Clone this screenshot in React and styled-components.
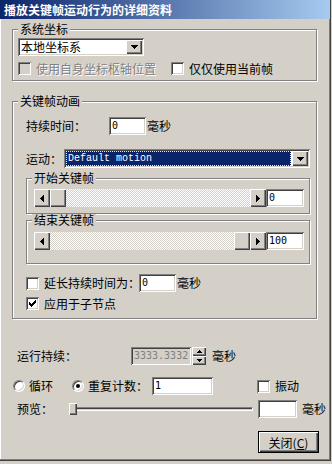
import React from "react";
import styled, { createGlobalStyle } from "styled-components";

const FACE = "#D4D0C8";
const SHADOW = "#808080";
const DARK = "#404040";
const LIGHT = "#FFFFFF";

const sunken = `box-shadow: inset 1px 1px ${SHADOW}, inset -1px -1px ${LIGHT}, inset 2px 2px ${DARK}, inset -2px -2px ${FACE};`;
const raised = `box-shadow: inset 1px 1px ${LIGHT}, inset -1px -1px ${DARK}, inset -2px -2px ${SHADOW};`;

const GlobalStyle = createGlobalStyle`
  html, body { margin: 0; padding: 0; background: ${FACE}; }
  body {
    font-family: "Noto Sans CJK SC", "Noto Sans", sans-serif;
    font-size: 12px;
    color: #000;
  }
  * { box-sizing: border-box; }
`;

const Window = styled.div`
  width: 331px;
  height: 461px;
  display: flex;
  flex-direction: column;
  background: ${FACE};
  border-right: 1px solid ${DARK};
  border-bottom: 1px solid ${DARK};
  box-shadow: inset -1px -1px ${SHADOW}, inset 1px 0 ${LIGHT};
`;

const TitleBar = styled.div`
  height: 19px;
  line-height: 19px;
  padding-left: 4px;
  color: #fff;
  font-weight: 700;
  font-size: 12px;
  white-space: nowrap;
  background: linear-gradient(to right, #0a246a, #a6caf0);
`;

const Body = styled.div`
  display: flex;
  flex-direction: column;
  align-items: flex-start;
  padding-left: 12px;
`;

const GroupBox = styled.div`
  display: flex;
  flex-direction: column;
  border: 1px solid ${SHADOW};
  box-shadow: 1px 1px 0 ${LIGHT}, inset 1px 1px 0 ${LIGHT};
  margin-top: ${(p) => p.$mt || 0}px;
  width: ${(p) => (p.$w ? `${p.$w}px` : "auto")};
  align-self: ${(p) => (p.$stretch ? "stretch" : "flex-start")};
`;

const Legend = styled.div`
  align-self: flex-start;
  margin: -7px 0 0 5px;
  padding: 0 2px;
  height: 12px;
  line-height: 12px;
  background: ${FACE};
  white-space: nowrap;
`;

const GroupBody = styled.div`
  display: flex;
  flex-direction: column;
  align-items: flex-start;
  padding: ${(p) => p.$pad};
`;

const Row = styled.div`
  display: flex;
  align-items: center;
  height: ${(p) => p.$h || 18}px;
  margin-top: ${(p) => p.$mt || 0}px;
  margin-left: ${(p) => p.$ml || 0}px;
  align-self: ${(p) => (p.$stretch ? "stretch" : "flex-start")};
`;

const Label = styled.span`
  width: ${(p) => p.$w}px;
  flex: none;
  white-space: nowrap;
  line-height: 12px;
`;

const Unit = styled.span`
  margin-left: ${(p) => p.$ml || 0}px;
  white-space: nowrap;
  line-height: 12px;
`;

const TextField = styled.div`
  width: ${(p) => p.$w}px;
  height: 18px;
  flex: none;
  margin-left: ${(p) => p.$ml || 0}px;
  padding-left: 3px;
  background: ${(p) => (p.$disabled ? FACE : LIGHT)};
  color: ${(p) => (p.$disabled ? SHADOW : "#000")};
  font-family: "DejaVu Sans Mono", "Liberation Mono", monospace;
  font-size: 10px;
  line-height: 18px;
  ${sunken}
`;

const ComboBox = styled.div`
  display: flex;
  align-items: stretch;
  padding: 2px;
  height: ${(p) => p.$h}px;
  width: ${(p) => (p.$w ? `${p.$w}px` : "auto")};
  flex: ${(p) => (p.$w ? "none" : "1")};
  background: ${LIGHT};
  ${sunken}
`;

const ComboText = styled.span`
  flex: 1;
  padding-left: 1px;
  line-height: 14px;
  white-space: nowrap;
`;

const ComboSelected = styled.span`
  flex: 1;
  margin-right: 1px;
  padding-left: 2px;
  background: #0a246a;
  color: #fff;
  font-family: "Liberation Mono", "DejaVu Sans Mono", monospace;
  font-size: 10px;
  line-height: 15px;
  white-space: nowrap;
  outline: 1px dotted #f4eca0;
  outline-offset: -1px;
`;

const DropButton = styled.span`
  width: 16px;
  flex: none;
  display: flex;
  align-items: center;
  justify-content: center;
  background: ${FACE};
  ${raised}
`;

const CheckLabel = styled.span`
  display: flex;
  align-items: center;
  gap: 5px;
  width: ${(p) => (p.$w ? `${p.$w}px` : "auto")};
  flex: none;
  margin-left: ${(p) => p.$ml || 0}px;
  white-space: nowrap;
  line-height: 12px;
  color: ${(p) => (p.$disabled ? SHADOW : "#000")};
  text-shadow: ${(p) => (p.$disabled ? `1px 1px 0 ${LIGHT}` : "none")};
`;

const CheckBox = styled.span`
  width: 13px;
  height: 13px;
  flex: none;
  display: flex;
  align-items: center;
  justify-content: center;
  background: ${(p) => (p.$disabled ? FACE : LIGHT)};
  ${sunken}
`;

const RadioLabel = styled.span`
  display: flex;
  align-items: center;
  gap: 4px;
  width: ${(p) => p.$w}px;
  flex: none;
  white-space: nowrap;
  line-height: 12px;
`;

const RadioCircle = styled.span`
  width: 12px;
  height: 12px;
  flex: none;
  display: flex;
  align-items: center;
  justify-content: center;
  border-radius: 50%;
  border: 1px solid;
  border-color: ${SHADOW} ${LIGHT} ${LIGHT} ${SHADOW};
  box-shadow: inset 1px 1px ${DARK}, inset -1px -1px ${FACE};
  background: ${LIGHT};
`;

const RadioDot = styled.span`
  width: 4px;
  height: 4px;
  border-radius: 50%;
  background: #000;
`;

const ScrollBar = styled.div`
  display: flex;
  width: ${(p) => p.$w}px;
  height: 18px;
  flex: none;
`;

const ScrollButton = styled.span`
  width: 16px;
  flex: none;
  display: flex;
  align-items: center;
  justify-content: center;
  background: ${FACE};
  ${raised}
`;

const Track = styled.span`
  flex: 1;
  background: repeating-conic-gradient(${LIGHT} 0 25%, ${FACE} 0 50%) 0 0 / 2px 2px;
`;

const Spin = styled.div`
  display: flex;
  flex-direction: column;
  width: 14px;
  height: 18px;
  flex: none;
  margin-left: ${(p) => p.$ml || 0}px;
`;

const SpinButton = styled.span`
  flex: 1;
  display: flex;
  align-items: center;
  justify-content: center;
  background: ${FACE};
  ${raised}
`;

const Trackbar = styled.div`
  position: relative;
  width: ${(p) => p.$w}px;
  height: 12px;
  flex: none;
  display: flex;
  align-items: center;
  padding-left: 1px;
`;

const Channel = styled.span`
  flex: 1;
  height: 4px;
  border-top: 1px solid ${SHADOW};
  border-left: 1px solid ${SHADOW};
  border-bottom: 1px solid ${LIGHT};
  border-right: 1px solid ${LIGHT};
  box-shadow: inset 1px 1px ${DARK};
  background: ${FACE};
`;

const TrackThumb = styled.span`
  position: absolute;
  left: 0;
  top: 0;
  width: 8px;
  height: 12px;
  background: ${FACE};
  ${raised}
`;

const PushButton = styled.button`
  width: 61px;
  height: 22px;
  margin-left: ${(p) => p.$ml || 0}px;
  padding: 0;
  border: 1px solid #000;
  background: ${FACE};
  font: inherit;
  color: #000;
  display: flex;
  align-items: center;
  justify-content: center;
  box-shadow: inset 1px 1px ${LIGHT}, inset -1px -1px ${DARK}, inset -2px -2px ${SHADOW};
`;

const Px = ({ w, h, d }) => (
  <svg width={w} height={h} viewBox={`0 0 ${w} ${h}`} shapeRendering="crispEdges">
    <path d={d} fill="#000" />
  </svg>
);

const DownArrow = () => <Px w={7} h={4} d="M0 0h7v1H0zM1 1h5v1H1zM2 2h3v1H2zM3 3h1v1H3z" />;
const LeftArrow = () => <Px w={4} h={7} d="M0 3h1v1H0zM1 2h1v3H1zM2 1h1v5H2zM3 0h1v7H3z" />;
const RightArrow = () => <Px w={4} h={7} d="M3 3h1v1H3zM2 2h1v3H2zM1 1h1v5H1zM0 0h1v7H0z" />;
const SmallUp = () => <Px w={5} h={3} d="M2 0h1v1H2zM1 1h3v1H1zM0 2h5v1H0z" />;
const SmallDown = () => <Px w={5} h={3} d="M0 0h5v1H0zM1 1h3v1H1zM2 2h1v1H2z" />;

const Check = ({ checked, disabled }) => (
  <CheckBox $disabled={disabled}>
    {checked && (
      <Px
        w={7}
        h={7}
        d="M6 0h1v1H6zM5 1h2v1H5zM0 2h1v1H0zM4 2h3v1H4zM0 3h2v1H0zM3 3h3v1H3zM0 4h5v1H0zM1 5h3v1H1zM2 6h1v1H2z"
      />
    )}
  </CheckBox>
);

const Radio = ({ selected }) => <RadioCircle>{selected && <RadioDot />}</RadioCircle>;

const Slider = ({ thumbAtEnd }) => (
  <ScrollBar $w={232}>
    <ScrollButton>
      <LeftArrow />
    </ScrollButton>
    {!thumbAtEnd && <ScrollButton />}
    <Track />
    {thumbAtEnd && <ScrollButton />}
    <ScrollButton>
      <RightArrow />
    </ScrollButton>
  </ScrollBar>
);

export default function App() {
  return (
    <>
      <GlobalStyle />
      <Window>
        <TitleBar>播放关键帧运动行为的详细资料</TitleBar>
        <Body>
          <GroupBox $w={305} $mt={10}>
            <Legend>系统坐标</Legend>
            <GroupBody $pad="3px 5px 5px 5px">
              <ComboBox $w={126} $h={18}>
                <ComboText>本地坐标系</ComboText>
                <DropButton>
                  <DownArrow />
                </DropButton>
              </ComboBox>
              <Row $mt={6} $h={13}>
                <CheckLabel $w={153} $disabled>
                  <Check disabled />
                  <span>使用自身坐标枢轴位置</span>
                </CheckLabel>
                <CheckLabel>
                  <Check />
                  <span>仅仅使用当前帧</span>
                </CheckLabel>
              </Row>
            </GroupBody>
          </GroupBox>

          <GroupBox $w={305} $mt={20}>
            <Legend>关键帧动画</Legend>
            <GroupBody $pad="10px 6px 8px 13px">
              <Row>
                <Label $w={83}>持续时间：</Label>
                <TextField $w={37}>0</TextField>
                <Unit $ml={1}>毫秒</Unit>
              </Row>
              <Row $mt={14} $h={19} $stretch>
                <Label $w={38}>运动：</Label>
                <ComboBox $h={19}>
                  <ComboSelected>Default motion</ComboSelected>
                  <DropButton>
                    <DownArrow />
                  </DropButton>
                </ComboBox>
              </Row>
              <GroupBox $mt={10} $stretch>
                <Legend>开始关键帧</Legend>
                <GroupBody $pad="5px 5px 6px 7px">
                  <Row>
                    <Slider />
                    <TextField $w={38}>0</TextField>
                  </Row>
                </GroupBody>
              </GroupBox>
              <GroupBox $mt={6} $stretch>
                <Legend>结束关键帧</Legend>
                <GroupBody $pad="6px 5px 13px 7px">
                  <Row>
                    <Slider thumbAtEnd />
                    <TextField $w={38}>100</TextField>
                  </Row>
                </GroupBody>
              </GroupBox>
              <Row $mt={10}>
                <CheckLabel $w={113}>
                  <Check />
                  <span>延长持续时间为：</span>
                </CheckLabel>
                <TextField $w={37}>0</TextField>
                <Unit $ml={1}>毫秒</Unit>
              </Row>
              <Row $mt={5} $h={13}>
                <CheckLabel>
                  <Check checked />
                  <span>应用于子节点</span>
                </CheckLabel>
              </Row>
            </GroupBody>
          </GroupBox>

          <Row $mt={28} $ml={5}>
            <Label $w={114}>运行持续：</Label>
            <TextField $w={60} $disabled>
              3333.3332
            </TextField>
            <Spin $ml={1}>
              <SpinButton>
                <SmallUp />
              </SpinButton>
              <SpinButton>
                <SmallDown />
              </SpinButton>
            </Spin>
            <Unit $ml={6}>毫秒</Unit>
          </Row>

          <Row $mt={12} $ml={1}>
            <RadioLabel $w={59}>
              <Radio />
              <span>循环</span>
            </RadioLabel>
            <RadioLabel $w={80}>
              <Radio selected />
              <span>重复计数：</span>
            </RadioLabel>
            <TextField $w={61}>1</TextField>
            <CheckLabel $ml={44}>
              <Check />
              <span>振动</span>
            </CheckLabel>
          </Row>

          <Row $mt={5} $ml={5}>
            <Label $w={52}>预览：</Label>
            <Trackbar $w={184}>
              <Channel />
              <TrackThumb />
            </Trackbar>
            <TextField $w={39} $ml={5} />
            <Unit $ml={5}>毫秒</Unit>
          </Row>

          <Row $mt={13} $h={22}>
            <PushButton $ml={246}>
              关闭(<u>C</u>)
            </PushButton>
          </Row>
        </Body>
      </Window>
    </>
  );
}
